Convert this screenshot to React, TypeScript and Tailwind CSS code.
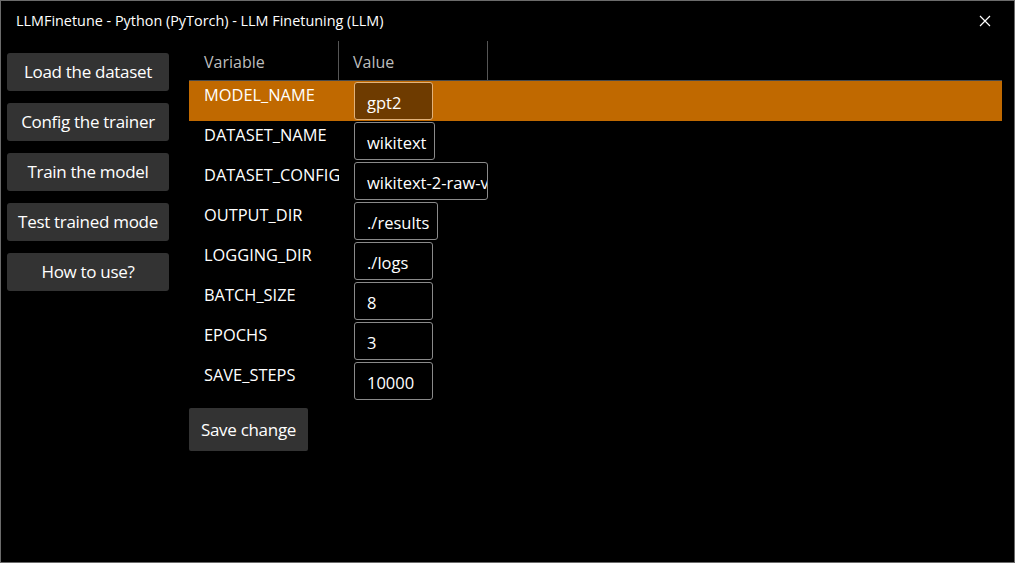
import React from 'react';

const rows: { name: string; value: string }[] = [
  { name: 'MODEL_NAME', value: 'gpt2' },
  { name: 'DATASET_NAME', value: 'wikitext' },
  { name: 'DATASET_CONFIG', value: 'wikitext-2-raw-v1' },
  { name: 'OUTPUT_DIR', value: './results' },
  { name: 'LOGGING_DIR', value: './logs' },
  { name: 'BATCH_SIZE', value: '8' },
  { name: 'EPOCHS', value: '3' },
  { name: 'SAVE_STEPS', value: '10000' },
];

const menu = ['Load the dataset', 'Config the trainer', 'Train the model', 'Test trained mode', 'How to use?'];

const font = { fontFamily: '"Open Sans", "Noto Sans", sans-serif' };

export default function App() {
  return (
    <div
      className="w-[1015px] h-[563px] bg-black border border-[#6b6b6b] flex flex-col text-white overflow-hidden"
      style={font}
    >
      {/* title bar */}
      <div className="h-[40px] shrink-0 flex items-center justify-between pl-[15px] pr-[23px]">
        <span className="text-[14.4px] text-white">
          LLMFinetune - Python (PyTorch) - LLM Finetuning (LLM)
        </span>
        <svg width="12" height="12" viewBox="0 0 12 12">
          <path d="M1 1L11 11M11 1L1 11" stroke="#fff" strokeWidth="1.2" />
        </svg>
      </div>

      <div className="flex flex-1">
        {/* sidebar */}
        <div className="w-[188px] shrink-0 pl-[6px] pt-[12px] flex flex-col gap-[12px]">
          {menu.map((m) => (
            <button
              key={m}
              className="w-[162px] h-[38px] bg-[#333333] rounded-[3px] text-[17px] text-white whitespace-nowrap overflow-hidden tracking-[-0.3px]"
            >
              {m}
            </button>
          ))}
        </div>

        {/* variable table */}
        <div className="flex-1 pr-[12px]">
          <div className="h-[40px] flex border-b border-[#4a4a4a]">
            <div className="w-[150px] border-r border-[#555] pl-[15px] pt-[9px] text-[16px] text-[#bdbdbd]">Variable</div>
            <div className="w-[149px] border-r border-[#555] pl-[14px] pt-[9px] text-[16px] text-[#bdbdbd]">Value</div>
          </div>
          {rows.map((r, i) => {
            const sel = i === 0;
            return (
              <div key={r.name} className={`h-[40px] flex ${sel ? 'bg-[#c06900]' : ''}`}>
                <div className="w-[150px] pl-[15px] pt-[2px] text-[16.4px] text-white whitespace-nowrap overflow-hidden">
                  {r.name}
                </div>
                <div className="w-[149px] pl-[15px] pt-[1px]">
                  <div
                    className={`inline-flex h-[38px] min-w-[79px] max-w-[134px] items-center pl-[12px] pr-[8px] pt-[5px] rounded-[3px] border text-[16.5px] whitespace-nowrap overflow-hidden ${
                      sel ? 'bg-[#6e3b00] border-[#e2b27a]' : 'bg-black border-[#8a8a8a]'
                    }`}
                  >
                    {r.value}
                  </div>
                </div>
              </div>
            );
          })}
          <button className="mt-[7px] w-[119px] h-[43px] bg-[#333333] rounded-[2px] text-[17px] text-white tracking-[-0.3px]">
            Save change
          </button>
        </div>
      </div>
    </div>
  );
}
